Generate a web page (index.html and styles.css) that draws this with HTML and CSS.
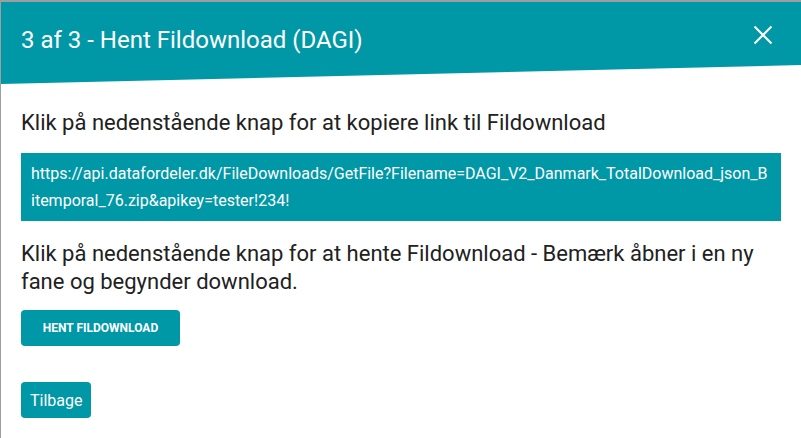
FILE: index.html
```html
<!DOCTYPE html>
<html lang="da">

<head>
    <meta charset="UTF-8">
    <meta name="viewport" content="width=device-width, initial-scale=1.0">
    <title>Hent Fildownload (DAGI)</title>
    <link rel="stylesheet" href="styles.css">
</head>

<body>
    <div class="dialog">
        <div class="dialog-header">
            <h1>3 af 3 - Hent Fildownload (DAGI)</h1>
            <button type="button" class="close-btn" aria-label="Luk">
                <svg width="20" height="20" viewBox="0 0 20 20">
                    <path d="M1.5 1.5 L18.5 18.5 M18.5 1.5 L1.5 18.5" stroke="#fff" stroke-width="2" fill="none"/>
                </svg>
            </button>
        </div>
        <div class="dialog-body">
            <p class="lead lead-first">Klik på nedenstående knap for at kopiere link til Fildownload</p>
            <div class="link-box">https://api.datafordeler.dk/FileDownloads/GetFile?Filename=DAGI_V2_Danmark_TotalDownload_json_Bitemporal_76.zip&amp;apikey=tester!234!</div>
            <p class="lead">Klik på nedenstående knap for at hente Fildownload - Bemærk åbner i en ny fane og begynder download.</p>
            <button type="button" class="btn btn-upper">Hent Fildownload</button>
            <div class="back-row">
                <button type="button" class="btn btn-back">Tilbage</button>
            </div>
        </div>
    </div>
</body>

</html>
```

FILE: styles.css
```css
body {
    font-family: Roboto, "Noto Sans", sans-serif;
    margin: 0;
    padding: 0;
    background: #fff;
}

.dialog {
    height: 436px;
    border-top: 2px solid #9e9e9e;
    border-left: 1px solid #9e9e9e;
    overflow: hidden;
}

.dialog-header {
    background: #0097a7;
    height: 82px;
    display: flex;
    align-items: flex-start;
    justify-content: space-between;
    padding: 0 28px 0 20px;
    clip-path: polygon(0 0, 100% 0, 100% 63px, 0 82px);
}

.dialog-header h1 {
    color: #fff;
    font-size: 24px;
    font-weight: normal;
    margin: 0;
    padding-top: 24px;
}

.close-btn {
    background: none;
    border: 0;
    padding: 0;
    margin-top: 23px;
    cursor: pointer;
}

.dialog-body {
    padding: 25px 20px 0 20px;
}

.lead {
    color: #212121;
    font-size: 22px;
    line-height: 28px;
    margin: 0 0 12px 0;
}

.lead-first {
    margin-bottom: 16px;
}

.link-box {
    background: #0097a7;
    color: #fff;
    font-size: 16px;
    line-height: 27px;
    padding: 7px 10px;
    margin: 0 0 19px 0;
    word-break: break-all;
}

.btn {
    background: #0097a7;
    color: #fff;
    border: 0;
    border-radius: 4px;
    font-family: Roboto, "Noto Sans", sans-serif;
    cursor: pointer;
}

.btn-upper {
    width: 159px;
    height: 36px;
    font-size: 12px;
    font-weight: bold;
    text-transform: uppercase;
    margin-top: 2px;
}

.back-row {
    margin-top: 36px;
}

.btn-back {
    height: 36px;
    padding: 0 9px;
    font-size: 16px;
}
```
